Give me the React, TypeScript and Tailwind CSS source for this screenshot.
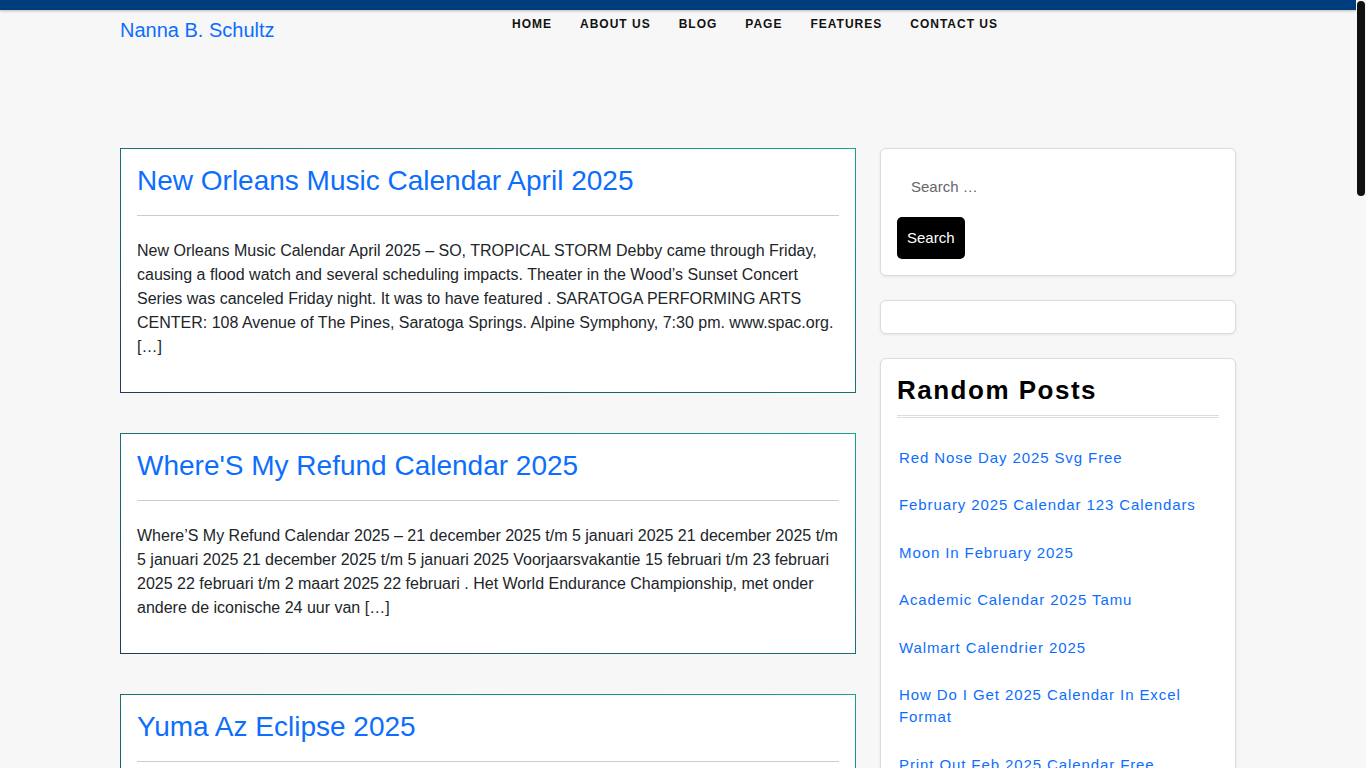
const posts = [
  {
    title: "New Orleans Music Calendar April 2025",
    excerpt:
      "New Orleans Music Calendar April 2025 – SO, TROPICAL STORM Debby came through Friday, causing a flood watch and several scheduling impacts. Theater in the Wood’s Sunset Concert Series was canceled Friday night. It was to have featured . SARATOGA PERFORMING ARTS CENTER: 108 Avenue of The Pines, Saratoga Springs. Alpine Symphony, 7:30 pm. www.spac.org. […]",
  },
  {
    title: "Where'S My Refund Calendar 2025",
    excerpt:
      "Where’S My Refund Calendar 2025 – 21 december 2025 t/m 5 januari 2025 21 december 2025 t/m 5 januari 2025 21 december 2025 t/m 5 januari 2025 Voorjaarsvakantie 15 februari t/m 23 februari 2025 22 februari t/m 2 maart 2025 22 februari . Het World Endurance Championship, met onder andere de iconische 24 uur van […]",
  },
  {
    title: "Yuma Az Eclipse 2025",
    excerpt:
      "Yuma Az Eclipse 2025 – The eclipse will be visible across much of the country, and skywatchers are already planning where to go. Here is what you need to know about the path, the timing and the best places to watch it in Arizona. […]",
  },
  {
    title: "Printable Calendar 2025 March",
    excerpt:
      "Printable Calendar 2025 March – Free printable calendars for every month of the year, with holidays and space for notes. Download, print and keep track of your plans at home or in the office. […]",
  },
];

const randomPosts = [
  "Red Nose Day 2025 Svg Free",
  "February 2025 Calendar 123 Calendars",
  "Moon In February 2025",
  "Academic Calendar 2025 Tamu",
  "Walmart Calendrier 2025",
  "How Do I Get 2025 Calendar In Excel Format",
  "Print Out Feb 2025 Calendar Free",
  "Ucsd Academic Calendar 2025",
  "Lunar Calendar 2025 Chinese",
];

const navItems = ["Home", "About Us", "Blog", "Page", "Features", "Contact Us"];

export default function App() {
  return (
    <div className="min-h-screen bg-[#f7f7f7] font-['Liberation_Sans',Arial,sans-serif]">
      {/* scrollbar overlay */}
      <div className="fixed top-0 right-0 w-[10px] h-screen bg-[#f7f7f7]">
        <div className="mx-auto mt-[1px] w-[8px] h-[195px] rounded-full bg-[#111]" />
      </div>

      <div className="w-[1356px]">
        {/* Top bar */}
        <div className="h-[10px] bg-[#003d7d] shadow-[0_1px_3px_rgba(0,0,0,0.25)]" />

        {/* Header */}
        <header className="mx-auto w-[1116px] flex items-start">
          <div className="w-[392px] pt-[7px]">
            <a className="text-[20px] leading-[26px] text-[#0d6efd]">Nanna B. Schultz</a>
          </div>
          <nav>
            <ul className="flex gap-[28px] pt-[7px]">
              {navItems.map((item) => (
                <li
                  key={item}
                  className="text-[12px] leading-[14px] font-bold uppercase tracking-[1px] text-[#111]"
                >
                  {item}
                </li>
              ))}
            </ul>
          </nav>
        </header>

        {/* Ad space */}
        <div className="h-[104px]" />

        {/* Main */}
        <main className="mx-auto w-[1116px] flex items-start gap-[24px] pb-10">
          <div className="w-[736px] flex flex-col gap-[40px]">
            {posts.map((post) => (
              <article
                key={post.title}
                className="bg-white border border-solid [border-image:linear-gradient(to_top_right,#1f3a5c,#17a58a)_1] px-4 pt-[15px] pb-[33px]"
              >
                <h2 className="text-[28px] leading-[34px] text-[#0d6efd]">{post.title}</h2>
                <hr className="mt-[17px] border-0 border-t border-[#cccccc]" />
                <p className="mt-[23px] text-[16px] leading-[24px] text-[#212529]">{post.excerpt}</p>
              </article>
            ))}
          </div>

          {/* Sidebar */}
          <aside className="w-[356px] flex flex-col gap-[24px]">
            <div className="bg-white border border-[#dcdcdc] rounded-[6px] shadow-[0_1px_3px_rgba(0,0,0,0.08)] p-4">
              <input
                type="search"
                placeholder="Search …"
                className="w-full h-[42px] px-[14px] text-[15px] text-[#333] placeholder:text-[#666] outline-none bg-transparent"
              />
              <button className="mt-[10px] h-[42px] px-[10px] bg-black text-white text-[15px] rounded-[5px]">
                Search
              </button>
            </div>

            <div className="h-[34px] bg-white border border-[#dcdcdc] rounded-[6px] shadow-[0_1px_3px_rgba(0,0,0,0.08)]" />

            <div className="bg-white border border-[#dcdcdc] rounded-[6px] shadow-[0_1px_3px_rgba(0,0,0,0.08)] p-4">
              <h3 className="text-[26px] leading-[30px] font-bold tracking-[1.5px] text-black pb-[10px] border-b-[3px] border-double border-[#dddddd]">
                Random Posts
              </h3>
              <ul className="mt-4 pl-[2px]">
                {randomPosts.map((p) => (
                  <li
                    key={p}
                    className="py-[12.75px] text-[15px] leading-[22px] tracking-[0.9px] text-[#0d6efd]"
                  >
                    <a>{p}</a>
                  </li>
                ))}
              </ul>
            </div>
          </aside>
        </main>
      </div>
    </div>
  );
}
